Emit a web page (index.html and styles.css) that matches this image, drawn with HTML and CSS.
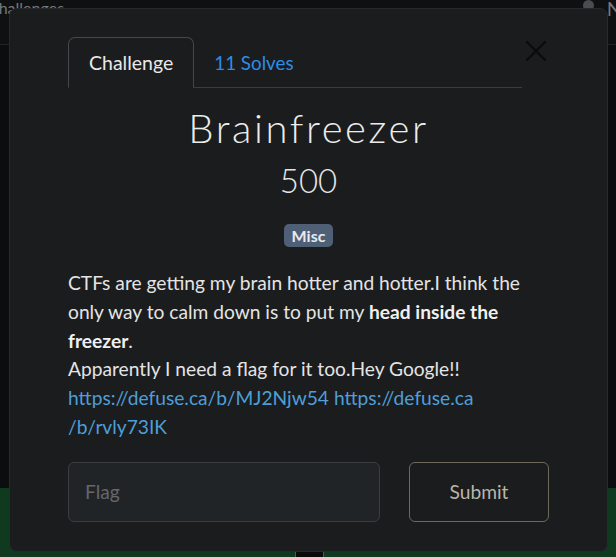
FILE: index.html
```html
<!DOCTYPE html>
<html>
<head>
<meta charset="utf-8">
<link rel="stylesheet" href="styles.css">
</head>
<body>
<div class="page">
  <header class="navbar">
    <span class="nav-title">Challenges</span>
    <span class="nav-right"><span class="dot"></span><span class="nav-n">N</span></span>
  </header>
  <main class="page-main"></main>
  <section class="green"><div class="stub"></div></section>
</div>

<div class="modal">
  <div class="modal-head">
    <ul class="tabs">
      <li class="tab active">Challenge</li>
      <li class="tab link">11 Solves</li>
    </ul>
    <button class="close" aria-label="Close">
      <svg width="22" height="22" viewBox="0 0 22 22"><path d="M2 2 L20 20 M20 2 L2 20" stroke="#0b0b0c" stroke-width="2.2" stroke-linecap="round" fill="none"/></svg>
    </button>
  </div>
  <h1 class="title">Brainfreezer</h1>
  <div class="points">500</div>
  <div class="tags"><span class="badge">Misc</span></div>
  <div class="desc">
    <p>CTFs are getting my brain hotter and hotter.I think the only way to calm down is to put my <strong>head inside the freezer</strong>.<br>Apparently I need a flag for it too.Hey Google!!<br><a href="#">https://defuse.ca/b/MJ2Njw54</a> <a href="#">https://defuse.ca<br>/b/rvly73IK</a></p>
  </div>
  <form class="flag-form">
    <input class="flag-input" type="text" placeholder="Flag">
    <button class="submit" type="button">Submit</button>
  </form>
</div>
</body>
</html>
```
FILE: styles.css
```css
* { box-sizing: border-box; }
html, body { margin: 0; padding: 0; }
body {
  width: 616px;
  height: 557px;
  overflow: hidden;
  background: #0d0e0f;
  font-family: Lato, "Open Sans", sans-serif;
}
.page {
  display: flex;
  flex-direction: column;
  height: 557px;
}
.navbar {
  height: 45px;
  border-bottom: 1px solid #222426;
  background: #0f1011;
  display: flex;
  justify-content: space-between;
  align-items: flex-start;
  color: #76787b;
  font-size: 16px;
  line-height: 16px;
}
.nav-title { margin-left: -12px; }
.nav-right { display: flex; align-items: flex-start; gap: 13px; margin-right: -6px; }
.dot { width: 11px; height: 11px; border-radius: 50%; background: #4a4c4f; }
.nav-n { font-size: 20px; line-height: 20px; margin-top: -2px; }
.page-main { height: 443px; background: #0c0d0e; }
.green {
  flex: 1;
  background: #0f3a1f;
  display: flex;
  justify-content: center;
  align-items: flex-end;
}
.stub {
  width: 29px;
  height: 6px;
  margin-left: 2px;
  background: #0a0a0a;
  border-left: 1px solid #555;
  border-right: 1px solid #555;
}

.modal {
  position: absolute;
  left: 9px;
  top: 8px;
  width: 599px;
  height: 544px;
  background: #1b1c1e;
  border: 1px solid #27292b;
  border-radius: 8px;
  padding: 28px 58px 0 58px;
  color: #e6e6e6;
}
.modal-head {
  display: flex;
  align-items: flex-start;
}
.tabs {
  list-style: none;
  margin: 0;
  padding: 0;
  display: flex;
  width: 454px;
  border-bottom: 1px solid #3a3c3f;
}
.tab {
  font-size: 19.5px;
  line-height: 27px;
  padding: 11px 20px 11px 20px;
  margin-bottom: -1px;
  border: 1px solid transparent;
  border-top-left-radius: 7px;
  border-top-right-radius: 7px;
}
.tab.active {
  color: #e8e8e8;
  background: #1b1c1e;
  border-color: #45484b #45484b #1b1c1e;
}
.tab.link { color: #2b8de6; padding-left: 19px; font-size: 18.8px; }
.close {
  margin: 3px 0 0 3px;
  padding: 0;
  width: 22px;
  height: 22px;
  background: none;
  border: 0;
  display: flex;
}
.title {
  margin: 16px 0 0 0;
  text-align: center;
  font-size: 40px;
  font-weight: 300;
  letter-spacing: 2.6px;
  line-height: 48px;
  color: #ececec;
}
.points {
  text-align: center;
  font-size: 33px;
  font-weight: 300;
  line-height: 40px;
  margin-top: 8px;
  color: #e6e6e6;
}
.tags {
  display: flex;
  justify-content: center;
  margin-top: 24px;
}
.badge {
  background: #4f6076;
  color: #e8eaee;
  font-size: 16px;
  font-weight: 700;
  line-height: 23px;
  padding: 0 8px;
  border-radius: 5px;
}
.desc {
  margin-top: 22px;
  font-size: 19.2px;
  line-height: 28.8px;
  color: #e4e4e4;
}
.desc p { margin: 0; }
.desc strong { font-weight: 700; color: #f0f0f0; }
.desc a { color: #4e9fd8; text-decoration: none; }
.flag-form {
  display: flex;
  gap: 29px;
  margin-top: 20px;
}
.flag-input {
  width: 312px;
  height: 60px;
  background: #212427;
  border: 1px solid #3a3d40;
  border-radius: 6px;
  padding: 0 16px;
  font-family: Lato, sans-serif;
  font-size: 19.2px;
  color: #ddd;
  outline: none;
}
.flag-input::placeholder { color: #64676b; }
.submit {
  width: 140px;
  height: 60px;
  background: transparent;
  border: 1px solid #6f695c;
  border-radius: 6px;
  font-family: Lato, sans-serif;
  font-size: 19.2px;
  color: #bab5ab;
}
```
